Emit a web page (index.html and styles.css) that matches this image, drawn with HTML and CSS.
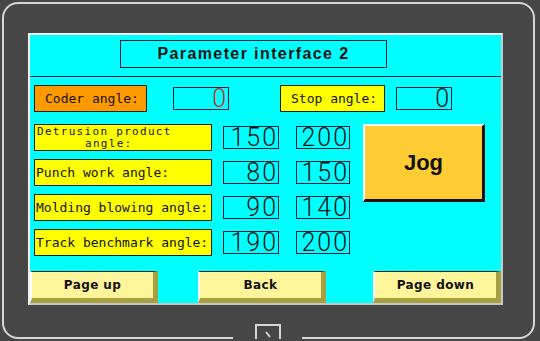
FILE: index.html
```html
<!DOCTYPE html>
<html lang="en">

<head>
    <meta charset="UTF-8">
    <title>Parameter interface 2</title>
    <link rel="stylesheet" href="styles.css">
</head>

<body>
    <div class="bezel">
        <div class="screen">
            <div class="title-bar">
                <div class="title-box">Parameter interface 2</div>
            </div>

            <div class="top-row">
                <div class="label orange coder">Coder angle:</div>
                <div class="value small red">0</div>
                <div class="label stop">Stop angle:</div>
                <div class="value small">0</div>
            </div>

            <div class="param-grid">
                <div class="label two-line">
                    <span class="line">Detrusion product</span>
                    <span class="line indent">angle:</span>
                </div>
                <div class="value col-a">150</div>
                <div class="value col-b">200</div>
                <button class="jog-btn">Jog</button>

                <div class="label">Punch work angle:</div>
                <div class="value col-a">80</div>
                <div class="value col-b">150</div>

                <div class="label">Molding blowing angle:</div>
                <div class="value col-a">90</div>
                <div class="value col-b">140</div>

                <div class="label">Track benchmark angle:</div>
                <div class="value col-a">190</div>
                <div class="value col-b">200</div>
            </div>

            <div class="nav-row">
                <button class="nav-btn">Page up</button>
                <button class="nav-btn">Back</button>
                <button class="nav-btn">Page down</button>
            </div>
        </div>

        <!-- little tab on the bottom of the frame -->
        <div class="notch">
            <svg width="28" height="17" viewBox="0 0 28 17">
                <path d="M2 17 V3 H26 V17" fill="none" stroke="#d8d8d8" stroke-width="2" />
                <path d="M12 10 L16 15" fill="none" stroke="#d8d8d8" stroke-width="2" />
            </svg>
        </div>
    </div>
</body>

</html>
```

FILE: styles.css
```css
* {
    margin: 0;
    padding: 0;
    box-sizing: border-box;
}

body {
    width: 540px;
    height: 341px;
    overflow: hidden;
    background-color: #474747;
    font-family: "DejaVu Sans Mono", monospace;
    color: #111;
}

.bezel {
    position: relative;
    margin: 2px 5px 0 2px;
    height: 337px;
    border: 2px solid #d6d6d6;
    border-radius: 16px;
    padding: 29px 0 0 24px;
}

.screen {
    width: 475px;
    height: 272px;
    background-color: #00ffff;
    border: 2px solid #c8c8c8;
    border-top-color: #f2f2f2;
    border-left-color: #f2f2f2;
    display: flex;
    flex-direction: column;
}

.title-bar {
    height: 42px;
    padding-top: 5px;
    border-bottom: 1px solid #102030;
}

.title-box {
    margin-left: 90px;
    width: 267px;
    height: 28px;
    border: 1px solid #102030;
    font-family: "Liberation Sans", Arial, sans-serif;
    font-weight: bold;
    font-size: 16px;
    letter-spacing: 1.4px;
    line-height: 26px;
    text-align: center;
}

.top-row {
    display: flex;
    align-items: center;
    padding: 8px 0 0 4px;
    height: 35px;
}

.label {
    background-color: #ffff00;
    border: 1px solid #202020;
    font-size: 13px;
    line-height: 13px;
    height: 27px;
    display: flex;
    align-items: center;
    padding-left: 1px;
    white-space: nowrap;
}

.label.orange {
    background-color: #ff9900;
}

.coder {
    width: 113px;
    padding-left: 10px;
}

.stop {
    width: 105px;
    padding-left: 10px;
    margin-left: 51px;
}

.value {
    width: 56px;
    height: 23px;
    border: 1px solid #102030;
    font-family: Roboto, "DejaVu Sans", sans-serif;
    font-weight: 300;
    font-size: 25px;
    letter-spacing: 2px;
    line-height: 21px;
    text-align: right;
    padding-right: 0;
}

.value.small {
    margin-left: 26px;
}

.top-row .value.small:last-child {
    margin-left: 11px;
}

.value.red {
    color: #c03030;
}

/* spacer tracks keep the uneven gaps of the panel */
.param-grid {
    display: grid;
    grid-template-columns: 178px 11px 56px 17px 54px 13px 122px;
    grid-auto-rows: 27px;
    row-gap: 8px;
    align-items: center;
    padding: 12px 0 0 4px;
}

.param-grid .label {
    grid-column: 1;
}

.param-grid .col-a {
    grid-column: 3;
}

.param-grid .col-b {
    grid-column: 5;
    width: 54px;
}

.two-line {
    flex-direction: column;
    align-items: flex-start;
    justify-content: center;
    padding-left: 2px;
    font-size: 11px;
    letter-spacing: 1.3px;
}

.two-line .line {
    display: block;
    height: 12px;
    line-height: 12px;
}

.indent {
    padding-left: 48px;
}

.jog-btn {
    grid-column: 7;
    grid-row: 1 / span 3;
    align-self: start;
    height: 78px;
    background-color: #ffcc33;
    border: 3px solid #111;
    border-top: 2px solid #ffffff;
    border-left: 2px solid #ffffff;
    font-family: "Liberation Sans", Arial, sans-serif;
    font-weight: bold;
    font-size: 22px;
    color: #111;
}

.nav-row {
    margin-top: auto;
    display: flex;
    justify-content: space-between;
}

.nav-btn {
    width: 128px;
    height: 32px;
    background-color: #fff59a;
    border-top: 1px solid #202020;
    border-left: 2px solid #ffffff;
    border-right: 5px solid #a8a040;
    border-bottom: 5px solid #a8a040;
    font-family: "DejaVu Sans", sans-serif;
    font-weight: bold;
    font-size: 12px;
    letter-spacing: 0.4px;
    color: #111;
}

.nav-btn:nth-child(2) {
    margin-left: 40px;
}

.nav-btn:nth-child(3) {
    margin-left: 47px;
}

.notch {
    position: absolute;
    left: 229px;
    bottom: -2px;
    width: 69px;
    height: 20px;
    background-color: #474747;
    display: flex;
    justify-content: center;
    align-items: flex-end;
}
```
